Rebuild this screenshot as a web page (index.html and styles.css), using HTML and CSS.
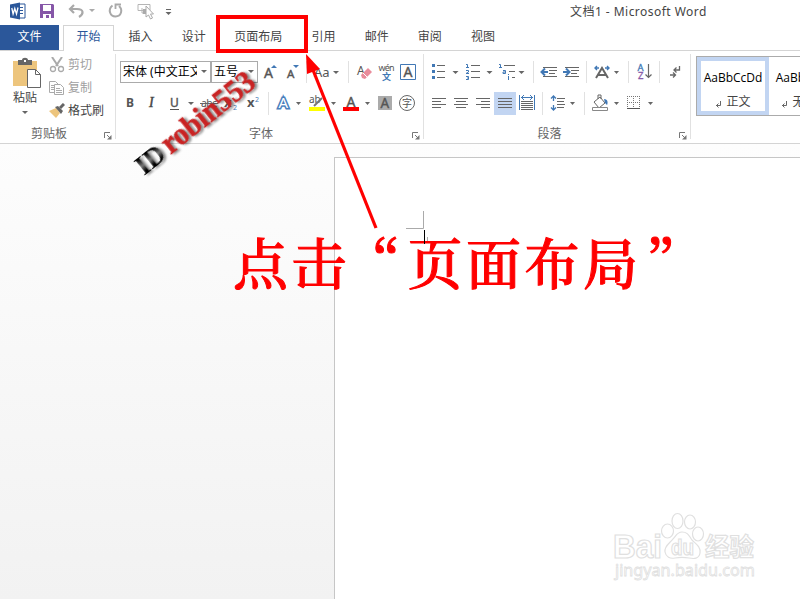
FILE: index.html
```html
<!DOCTYPE html>
<html lang="zh-CN">
<head>
<meta charset="utf-8">
<title>文档1 - Microsoft Word</title>
<link rel="stylesheet" href="styles.css">
</head>
<body>
<div class="window">
<header class="titlebar">
  <svg class="quick" width="200" height="25" viewBox="0 0 200 25">
    <path d="M17 4h8v14h-8z" fill="#fff" stroke="#2b579a"/><path d="M20 7.500h3M20 10.500h3M20 13.500h3" stroke="#2b579a"/>
    <path d="M10 4.500l10-2v17l-10-2z" fill="#2b579a"/><path d="M11.800 8l1.300 6 1.700-5.500L16.500 14l1.500-6.500" fill="none" stroke="#fff" stroke-width="1.300"/>
    <path d="M40 4h13l1 1v13H40z" fill="#8657a8"/><path d="M43 5h8v6h-8zM43 14h8v4h-2v-3h-3v3h-3z" fill="#fff"/>
    <path d="M74 5l-4 4 4 4M71 9h6c7 0 7 5 2 8" fill="none" stroke="#a9a9a9" stroke-width="2.200"/><path d="M89 9h6l-3 3z" fill="#aaa"/>
    <path d="M112.500 5.500c-5 4-2.500 11 3 11 6 0 7.500-7 3.500-10.500" fill="none" stroke="#a9a9a9" stroke-width="2"/><path d="M115.500 9V4.500h5.500" fill="none" stroke="#a9a9a9" stroke-width="1.800"/>
    <path d="M150 10V4.500h-12v6h6M142 8v5h4" fill="none" stroke="#b5b5b5"/><path d="M143 9h5v5h-5z" fill="#aaa"/><path d="M146 6v11l2.500-2 2 4 2-1-2-4h3z" fill="#fff" stroke="#aaa"/>
    <path d="M166 9.500h5" stroke="#666"/><path d="M165.500 12h6l-3 3z" fill="#666"/>
  </svg>
  <span class="title">文档1 - Microsoft Word</span>
</header>
<nav class="tabs">
  <span class="tab file">文件</span><span class="tab active">开始</span><span class="tab">插入</span><span class="tab">设计</span><span class="tab layout">页面布局</span><span class="tab refs">引用</span><span class="tab">邮件</span><span class="tab">审阅</span><span class="tab">视图</span>
</nav>
<section class="ribbon">
  <div class="group clipboard">
    <div class="clip-body">
      <div class="paste">
        <svg width="30" height="31" viewBox="12 57 30 31"><path d="M13 61h24v25H13z" fill="#edc57d"/><path d="M18 60h4c0-3 6-3 6 0h4v5H18z" fill="#666"/><path d="M24 60h2v2h-2z" fill="#fff"/><path d="M27.500 69.500h8l5 5v13h-13z" fill="#fff" stroke="#666"/><path d="M35.500 69.500v5h5" fill="none" stroke="#666"/></svg>
        <span>粘贴</span>
        <svg width="6" height="4" viewBox="0 0 6 4"><path d="M0 0h6L3 3z" fill="#666"/></svg>
      </div>
      <div class="clip-list">
        <div class="clip-item off"><svg width="16" height="16" viewBox="49 56 16 16"><path d="M52 56l6 9M62 56l-6 9" stroke="#aaa" stroke-width="2"/><circle cx="53" cy="68" r="2.500" fill="none" stroke="#aaa" stroke-width="1.300"/><circle cx="61" cy="68" r="2.500" fill="none" stroke="#aaa" stroke-width="1.300"/></svg><span>剪切</span></div>
        <div class="clip-item off"><svg width="16" height="16" viewBox="49 79 16 16"><path d="M49.500 80.500h6l3 3v8h-9z" fill="#fff" stroke="#aaa"/><path d="M54.500 83.500h6l3 3v7h-9zM56 87.500h4M56 89.500h6M56 91.500h6M51 84.500h3M51 86.500h3M51 88.500h3" fill="#fff" stroke="#aaa"/></svg><span>复制</span></div>
        <div class="clip-item"><svg width="16" height="16" viewBox="49 102 16 16"><path d="M49 110l7-3 4 5-4 5z" fill="#edc57d"/><path d="M55 106l3-1 5 5-2 3z" fill="#666"/><path d="M60 107l4-4" stroke="#666" stroke-width="3"/></svg><span>格式刷</span></div>
      </div>
    </div>
    <footer class="caption"><span>剪贴板</span><svg class="launch" width="8" height="8" viewBox="0 0 8 8"><path d="M.5 6V.5H6M3 3l3 3" fill="none" stroke="#777"/><path d="M7.500 3v4.500H3z" fill="#777"/></svg></footer>
  </div>

  <div class="group font">
    <div class="row font-top">
      <div class="select"><span>宋体 (中文正文)</span><svg width="7" height="4" viewBox="0 0 7 4"><path d="M1 0h6L4 3z" fill="#666"/></svg></div>
      <div class="select size"><span>五号</span><svg width="7" height="4" viewBox="0 0 7 4"><path d="M1 0h6L4 3z" fill="#666"/></svg></div>
      <svg viewBox="258 61 23 22"><text x="264" y="78" font-size="14" class="glyph">A</text><path d="M271 68h6l-3-3z" fill="#4178b5"/></svg>
      <svg viewBox="281 61 25 22"><text x="287" y="78" font-size="11.500" class="glyph">A</text><path d="M293 65h6l-3 3z" fill="#4178b5"/></svg>
      <i class="sep"></i>
      <svg viewBox="307 61 41 22"><text x="314" y="77" font-size="13" class="glyph thin">Aa</text><path d="M333 71h6l-3 3z" fill="#666"/></svg>
      <i class="sep"></i>
      <svg viewBox="349 61 25 22"><text x="357" y="75" font-size="12" class="glyph thin">A</text><path d="M361 75l7-7 4 4-7 7-3-1z" fill="#e98c9b"/><path d="M363 73l4 4" stroke="#fff"/></svg>
      <svg viewBox="374 61 24 22"><text x="378.500" y="71" font-size="9" textLength="16" class="glyph thin">wén</text><text x="382" y="79.500" font-size="9" font-weight="bold" fill="#4178b5">文</text></svg>
      <svg viewBox="398 61 22 22"><path d="M400.500 64.500h15v15h-15z" fill="none" stroke="#4178b5"/><text x="403.500" y="77" font-size="14" class="glyph">A</text></svg>
    </div>
    <div class="row font-bottom">
      <svg viewBox="120 92 21 23"><text x="126" y="107" font-size="12" font-weight="bold" class="bare">B</text></svg>
      <svg viewBox="141 92 22 23"><text x="149" y="107" font-size="12" font-style="italic" class="serif">I</text></svg>
      <svg viewBox="163 92 33 23"><text x="170" y="106.500" font-size="12" class="glyph">U</text><path d="M170 109.500h9" stroke="#555"/><path d="M188 102h6l-3 3z" fill="#666"/></svg>
      <svg viewBox="196 92 22 23"><text x="201" y="107" font-size="10.500" textLength="16" class="glyph thin">abc</text><path d="M200 103.500h18" stroke="#666"/></svg>
      <svg viewBox="218 92 24 23"><text x="224" y="107" font-size="13" font-weight="bold" class="bare">x</text><text x="233" y="109.500" font-size="7" fill="#4178b5">2</text></svg>
      <svg viewBox="242 92 26 23"><text x="247" y="107" font-size="13" font-weight="bold" class="bare">x</text><text x="255" y="102" font-size="7" fill="#4178b5">2</text></svg>
      <i class="sep"></i>
      <svg viewBox="269 92 34 23"><text x="278.500" y="108" font-size="15" fill="#fff" stroke="#4a80bd" stroke-width="3.200" paint-order="stroke">A</text><path d="M296 102h5l-2.500 3z" fill="#666"/></svg>
      <svg viewBox="303 92 35 23"><text x="309" y="103" font-size="10" class="glyph thin">ab</text><path d="M309 107h16v4h-16z" fill="#ff0"/><path d="M314 106l8-8" stroke="#777" stroke-width="2"/><path d="M331 102h5l-2.500 3z" fill="#666"/></svg>
      <svg viewBox="338 92 36 23"><text x="346.500" y="107" font-size="14" class="glyph">A</text><path d="M343 107h16v4h-16z" fill="red"/><path d="M365 102h5l-2.500 3z" fill="#666"/></svg>
      <svg viewBox="374 92 22 23"><path d="M378 96h14v14h-14z" fill="#ababab"/><text x="380.500" y="108" font-size="13.500" class="glyph">A</text></svg>
      <svg viewBox="396 92 24 23"><circle cx="407" cy="103" r="7.500" fill="none" stroke="#666"/><text x="402" y="107" font-size="10" class="bare">字</text></svg>
    </div>
    <footer class="caption"><span>字体</span><svg class="launch" width="8" height="8" viewBox="0 0 8 8"><path d="M.5 6V.5H6M3 3l3 3" fill="none" stroke="#777"/><path d="M7.500 3v4.500H3z" fill="#777"/></svg></footer>
  </div>

  <div class="group paragraph">
    <div class="row para-top">
      <svg viewBox="428 61 34 22"><path d="M432 64h3v3h-3zM432 70h3v3h-3zM432 76h3v3h-3z" fill="#4178b5"/><path d="M437 65.500h8M437 71.500h8M437 77.500h8" stroke="#666"/><path d="M452.500 71h6l-3 3z" fill="#666"/></svg>
      <svg viewBox="462 61 34 22"><path d="M466 64.500h1.500v3M466 67.500h3M466 70.500h2.500v1.500l-2.500 1.500h3M466 76.500h2.500v3H466M467 78h2" fill="none" stroke="#4178b5"/><path d="M471 65.500h9M471 71.500h9M471 77.500h9" stroke="#666"/><path d="M486.500 71h6l-3 3z" fill="#666"/></svg>
      <svg viewBox="496 61 37 22"><path d="M499 64.500h1.500v3M499 67.500h3M503 70.500h2.500v3H503v-1.500h2M508.500 74v1M508.500 76v4" fill="none" stroke="#4178b5"/><path d="M504 65.500h11M509 71.500h6M512 77.500h3" stroke="#666"/><path d="M518.500 71h6l-3 3z" fill="#666"/></svg>
      <i class="sep"></i>
      <svg viewBox="534 61 26 22"><path d="M543 67.500h14M549 70.500h8M549 73.500h6M543 76.500h14" stroke="#666"/><path d="M548 72h-6M545 68.500L541.500 72l3.500 3.500" fill="none" stroke="#4178b5" stroke-width="2"/></svg>
      <svg viewBox="560 61 26 22"><path d="M565 67.500h14M571 70.500h8M571 73.500h6M565 76.500h14" stroke="#666"/><path d="M563 72h6M566 68.500l3.500 3.500-3.500 3.500" fill="none" stroke="#4178b5" stroke-width="2"/></svg>
      <i class="sep"></i>
      <svg viewBox="587 61 41 22"><path d="M596 78l6-10 6 10M598 75h8" fill="none" stroke="#666" stroke-width="2"/><path d="M599 68h-4M597 66l-2 2 2 2M605 68h4M607 66l2 2-2 2" fill="none" stroke="#4178b5" stroke-width="1.400"/><path d="M614 71h5l-2.500 3z" fill="#666"/></svg>
      <i class="sep"></i>
      <svg viewBox="629 61 30 22"><text x="637.500" y="71" font-size="9.500" fill="#4178b5" stroke="#4178b5" stroke-width=".3">A</text><text x="638" y="79" font-size="9.500" fill="#8657a8" stroke="#8657a8" stroke-width=".3">Z</text><path d="M648.500 64v13M645.500 74.500l3 3 3-3" fill="none" stroke="#666" stroke-width="1.200"/></svg>
      <i class="sep"></i>
      <svg viewBox="660 61 28 22"><path d="M679.500 66v4h-5M676.500 67.500l-2.500 2.500 2.500 2.500M670 75h5M673 72.500l2.500 2.500-2.500 2.500" fill="none" stroke="#666" stroke-width="1.300"/></svg>
    </div>
    <div class="row para-bottom">
      <svg viewBox="428 92 22 23"><path d="M432 98.500h14M432 101.500h9M432 104.500h14M432 107.500h9" stroke="#666"/></svg>
      <svg viewBox="450 92 22 23"><path d="M454 98.500h14M456 101.500h10M454 104.500h14M456 107.500h10" stroke="#666"/></svg>
      <svg viewBox="472 92 22 23"><path d="M476 98.500h14M481 101.500h9M476 104.500h14M481 107.500h9" stroke="#666"/></svg>
      <svg class="picked" viewBox="494 92 22 23"><path d="M498 98.500h14M498 101.500h14M498 104.500h14M498 107.500h14" stroke="#666"/></svg>
      <svg viewBox="516 92 26 23"><path d="M519.500 95v15M534.500 95v15M521 97.500h12M524 95l-2.500 2.500L524 100M530 95l2.500 2.500L530 100" fill="none" stroke="#4178b5"/><path d="M521 101.500h12M521 103.500h12M521 105.500h12M521 107.500h12M521 109.500h12" stroke="#666"/></svg>
      <i class="sep"></i>
      <svg viewBox="543 92 41 23"><path d="M557 98.500h8M557 101.500h7M557 104.500h8M557 107.500h7" stroke="#666"/><path d="M553.500 96v5M551 98.500l2.500-2.500 2.500 2.500M553.500 105v5M551 107.500l2.500 2.500 2.500-2.500" fill="none" stroke="#4178b5" stroke-width="1.300"/><path d="M570 102h5l-2.500 3z" fill="#666"/></svg>
      <i class="sep"></i>
      <svg viewBox="585 92 40 23"><path d="M594 102l6-5 5 6-6 5zM598 99v-4h3v4" fill="#fff" stroke="#666"/><path d="M604 99c4 0 4 4 3 6l-2-2z" fill="#4178b5"/><path d="M592.500 107.500h15v3h-15z" fill="#fff" stroke="#888"/><path d="M614 102h5l-2.500 3z" fill="#666"/></svg>
      <svg viewBox="625 92 35 23"><path d="M627 96.500h13M627 102.500h13M627.500 96v12M633.500 96v12M639.500 96v12" stroke="#777" stroke-dasharray="1 1"/><path d="M627 108.500h13" stroke="#555"/><path d="M648 102h5l-2.500 3z" fill="#666"/></svg>
    </div>
    <footer class="caption"><span>段落</span><svg class="launch" width="8" height="8" viewBox="0 0 8 8"><path d="M.5 6V.5H6M3 3l3 3" fill="none" stroke="#777"/><path d="M7.500 3v4.500H3z" fill="#777"/></svg></footer>
  </div>

  <div class="gallery">
    <div class="style chosen"><span class="sample">AaBbCcDd</span><span class="name"><svg width="7" height="7" viewBox="0 0 7 7"><path d="M5.500 0v4.500H1M3.500 2.500l-2 2 2 2" fill="none" stroke="#666"/></svg>正文</span></div>
    <div class="style"><span class="sample">AaBbCcDd</span><span class="name"><svg width="7" height="7" viewBox="0 0 7 7"><path d="M5.500 0v4.500H1M3.500 2.500l-2 2 2 2" fill="none" stroke="#666"/></svg>无间隔</span></div>
  </div>
</section>
<main class="workspace"><div class="sheet"></div></main>

<svg class="overlay" width="800" height="599" viewBox="0 0 800 599">
  <path d="M423.500 211v17.500H406" fill="none" stroke="#aaa"/><path d="M427.500 237v4" stroke="#aaa"/>
  <rect x="218" y="17" width="88" height="34" fill="none" stroke="red" stroke-width="4"/>
  <path d="M376 228L313 70" stroke="red" stroke-width="3.200"/><path d="M306 54l14 15-13 5z" fill="red"/>
  <text class="note" x="233" y="284">点击<tspan dx="-5">“</tspan><tspan dx="4">页面布局</tspan><tspan dx="5">”</tspan></text>
  <path d="M424.500 230v14" stroke="#000"/>
  <g class="signature" transform="translate(144 176) rotate(-38.500)">
    <text x="0" y="0" font-size="27" textLength="30" lengthAdjust="spacingAndGlyphs" fill="url(#ink)">ID</text>
    <text x="34" y="0" font-size="32" textLength="111" lengthAdjust="spacingAndGlyphs" fill="#c92323" stroke="#c92323" stroke-width=".5">robin553</text>
  </g>
  <defs><linearGradient id="ink" x1="0" y1="0" x2="0" y2="1"><stop offset=".25" stop-color="#000"/><stop offset=".5" stop-color="#777"/><stop offset=".7" stop-color="#000"/></linearGradient></defs>
  <g class="brand" fill="#fff" stroke="#e0e0e0">
    <text x="613" y="558" font-size="33" textLength="49" lengthAdjust="spacingAndGlyphs">Bai</text>
    <ellipse cx="667.500" cy="531" rx="6" ry="7"/><ellipse cx="677.500" cy="521" rx="5.500" ry="7.500"/><ellipse cx="690" cy="522" rx="5.500" ry="7"/><ellipse cx="698" cy="534" rx="5.500" ry="7"/>
    <path d="M682 532c6 0 7 4 10 8 4 4 9 7 8 13s-6 6-11 5c-5-1-9-1-14 0s-9-1-10-6c-1-6 5-9 8-13 3-3 4-7 9-7z"/>
    <text x="671" y="555" font-size="22" textLength="23" lengthAdjust="spacingAndGlyphs">du</text>
    <text x="705" y="556" font-size="25" textLength="49" lengthAdjust="spacingAndGlyphs">经验</text>
    <text class="domain" x="615" y="576" font-size="16.500" textLength="140" lengthAdjust="spacingAndGlyphs">jingyan.baidu.com</text>
  </g>
</svg>
</div>
</body>
</html>
```
FILE: styles.css
```css
* { box-sizing: border-box; }
body { margin: 0; overflow: hidden; color: #444; font: 12px/16px "Noto Sans", "Noto Sans CJK SC", sans-serif; }
svg { display: block; flex: none; }
.window { position: relative; width: 800px; height: 599px; display: flex; flex-direction: column; overflow: hidden; background: #fff; }
.titlebar { height: 25px; display: flex; }
.title { margin: 4px 0 0 370px; font-size: 12px; letter-spacing: .46px; white-space: nowrap; }
.tabs { height: 26px; display: flex; border-bottom: 1px solid #d4d4d4; }
.tab { width: 53.2px; height: 25px; line-height: 24px; text-align: center; white-space: nowrap; }
.file { width: 59px; background: #2b579a; color: #fff; }
.active { width: 51px; height: 26px; margin-left: 4px; margin-right: 0; border: 1px solid #d4d4d4; border-bottom: 0; background: #fff; color: #2b579a; line-height: 22px; }
.layout { width: 78px; margin-left: -1px; }
.refs { margin-left: -.5px; }
.ribbon { height: 93px; display: flex; border-bottom: 1px solid #d4d4d4; background: #fff; }
.group { flex: none; height: 85px; margin-top: 3px; border-right: 1px solid #e1e1e1; display: flex; flex-direction: column; }
.clipboard { width: 116px; }
.clip-body { display: flex; height: 71px; }
.paste { width: 50px; padding-top: 3px; display: flex; flex-direction: column; align-items: center; }
.paste > svg:first-child { margin-left: 4px; }
.paste span { margin: 2px 0 5px; }
.clip-list { display: flex; flex-direction: column; gap: 7px; padding-top: 3px; }
.clip-item { display: flex; align-items: center; gap: 2px; height: 16px; white-space: nowrap; }
.clip-item svg { margin-left: -1px; }
.clip-item span { margin-left: 1px; }
.off { color: #a0a0a0; }
.caption { display: flex; justify-content: center; align-items: center; height: 16px; margin-top: auto; margin-bottom: -3px; padding: 0 3px 0 0; color: #666; }
.caption span { flex: 1; text-align: center; }
.launch { margin-top: 3px; }
.clipboard .caption span { padding-right: 6px; }
.font { width: 308px; padding-left: 4px; }
.font .caption span { padding-right: 10px; }
.paragraph { width: 267px; padding-left: 4px; }
.paragraph .caption span { padding-right: 8px; }
.row { display: grid; }
.row > svg { width: 100%; height: 100%; }
.font-top, .para-top { height: 22px; margin-top: 7px; }
.font-bottom, .para-bottom { height: 23px; margin-top: 9px; }
.font-top { grid-template-columns: 91px 47px 23px 25px 1px 41px 1px 25px 24px 22px; }
.font-bottom { grid-template-columns: 21px 22px 33px 22px 24px 26px 1px 34px 35px 36px 22px 24px; }
.para-top { grid-template-columns: 34px 34px 37px 1px 26px 26px 1px 41px 1px 30px 1px 28px; }
.para-bottom { grid-template-columns: 22px 22px 22px 22px 26px 1px 41px 1px 40px 35px; }
.sep { background: #e1e1e1; }
.picked { background: #c2d5f2; }
.select { border: 1px solid #ababab; display: flex; align-items: center; justify-content: space-between; padding: 0 3px 0 2px; color: #000; }
.select span { overflow: hidden; white-space: nowrap; width: 74px; }
.size { border-left-width: 1px; }
.size span { width: 28px; }
.glyph { fill: #555; stroke: #555; stroke-width: .4px; }
.thin { stroke: none; }
.bare { fill: #555; }
.serif { fill: #444; stroke: #444; stroke-width: .4px; font-family: "Liberation Serif", serif; font-size: 14px; }
.gallery { width: 110px; height: 60px; margin: 5px 0 0 5px; border: 1px solid #ababab; display: flex; flex: none; }
.style { width: 72px; flex: none; display: flex; flex-direction: column; align-items: center; padding-top: 13px; }
.chosen { width: 72px; padding-top: 9px; border: 4px solid #c2d5f2; }
.sample { color: #000; font: 12px/16px "Open Sans", sans-serif; }
.name { display: flex; align-items: center; gap: 4px; margin-top: 8px; white-space: nowrap; }
.name svg { margin-top: 4px; }
.workspace { flex: 1; padding: 13px 0 0 334px; background: linear-gradient(#fdfdfd, #f2f2f2); }
.sheet { height: 100%; border-left: 1px solid #c6c6c6; border-top: 1px solid #c6c6c6; background: #fff; }
.overlay { position: absolute; left: 0; top: 0; }
.note { font: 500 55px "Noto Serif CJK SC", "Noto Sans CJK SC", serif; letter-spacing: 3.5px; fill: red; stroke: red; stroke-width: 1px; }
.signature { font-family: "Liberation Serif", serif; font-weight: bold; filter: drop-shadow(2px 2px 1px rgba(0, 0, 0, .45)); }
.brand { font-family: "Liberation Sans", "Noto Sans CJK SC", sans-serif; font-weight: bold; stroke-width: 1.2px; }
.domain { font-family: "Noto Sans", sans-serif; font-weight: normal; stroke-width: .8px; }
```
